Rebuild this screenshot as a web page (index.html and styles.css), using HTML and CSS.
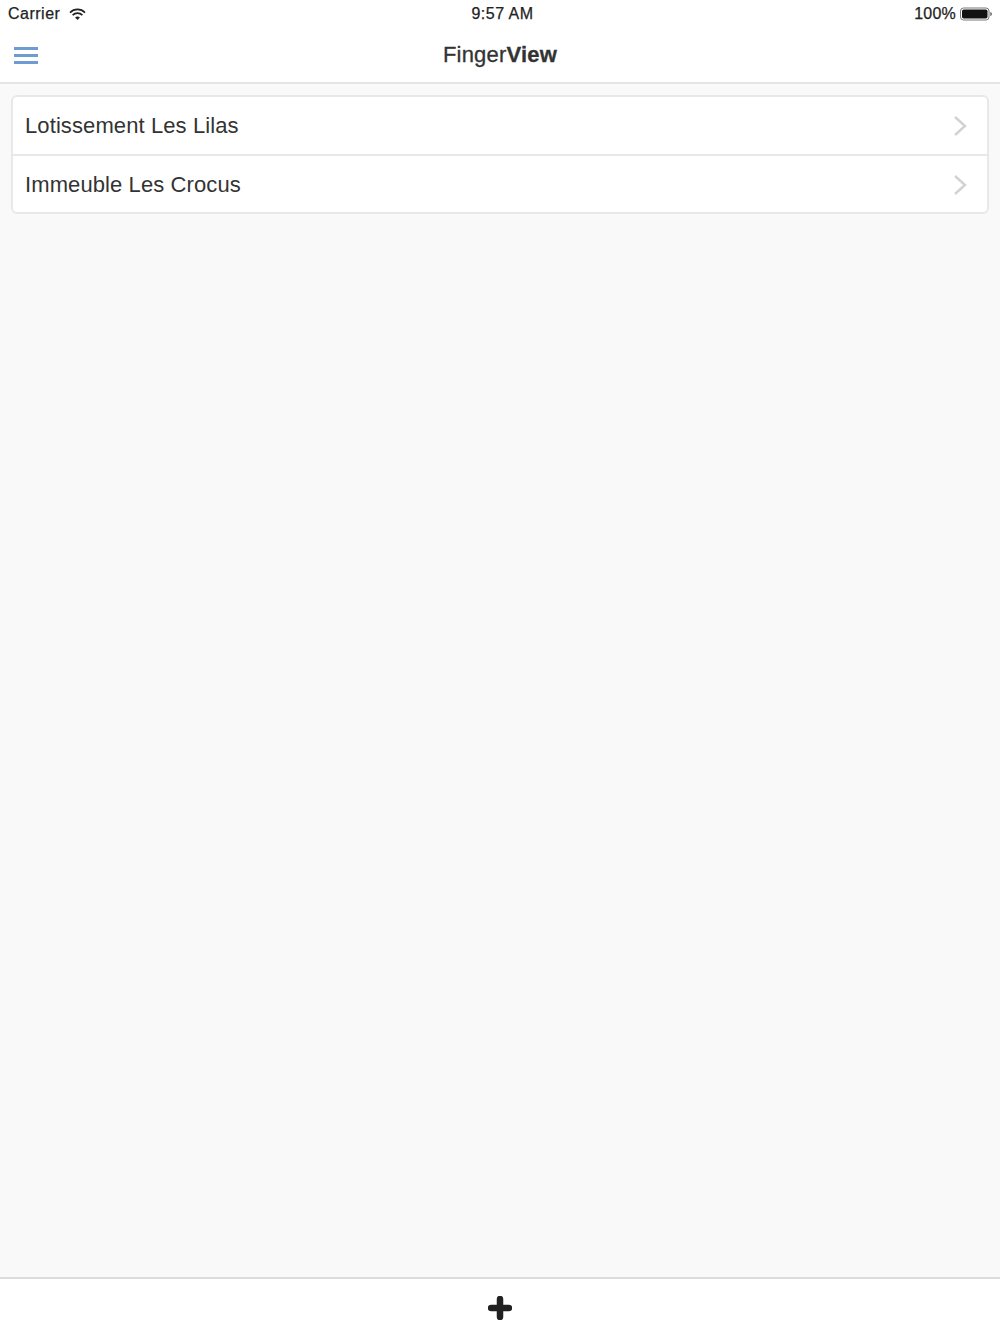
FILE: index.html
```html
<!DOCTYPE html>
<html lang="en">
<head>
    <meta charset="UTF-8">
    <meta name="viewport" content="width=device-width, initial-scale=1.0">
    <title>FingerView</title>
    <link rel="stylesheet" href="styles.css">
</head>
<body>
    <div class="app">
        <header class="top">
            <div class="status-bar">
                <div class="status-left">
                    <span>Carrier</span>
                    <svg class="wifi" width="17" height="13" viewBox="0 0 17 13">
                        <path d="M1 4.6 A10.5 10.5 0 0 1 16 4.6" fill="none" stroke="#222" stroke-width="1.7"/>
                        <path d="M3.6 7.2 A7 7 0 0 1 13.4 7.2" fill="none" stroke="#222" stroke-width="1.7"/>
                        <path d="M6.1 9.6 A3.4 3.4 0 0 1 10.9 9.6 L8.5 12 Z" fill="#222"/>
                    </svg>
                </div>
                <div class="status-time">9:57 AM</div>
                <div class="status-right">
                    <span class="status-pct">100%</span>
                    <svg class="battery" width="33" height="14" viewBox="0 0 33 14">
                        <rect x="0.5" y="1" width="28.5" height="12" rx="3" fill="none" stroke="#777" stroke-width="1"/>
                        <rect x="2" y="2.5" width="25.5" height="9" rx="1.8" fill="#111"/>
                        <path d="M30.2 5 C31.5 5.2 32 6 32 7 C32 8 31.5 8.8 30.2 9 Z" fill="#777"/>
                    </svg>
                </div>
            </div>
            <nav class="nav-bar">
                <a class="menu-btn" href="#" aria-label="Menu">
                    <span></span>
                    <span></span>
                    <span></span>
                </a>
                <h1 class="title">Finger<b>View</b></h1>
            </nav>
        </header>

        <main class="content">
            <ul class="list">
                <li class="list-item">
                    <span>Lotissement Les Lilas</span>
                    <svg class="chevron" width="14" height="22" viewBox="0 0 14 22">
                        <path d="M2 2 L12 11 L2 20" fill="none" stroke="#d2d2d2" stroke-width="2.4"/>
                    </svg>
                </li>
                <li class="list-item">
                    <span>Immeuble Les Crocus</span>
                    <svg class="chevron" width="14" height="22" viewBox="0 0 14 22">
                        <path d="M2 2 L12 11 L2 20" fill="none" stroke="#d2d2d2" stroke-width="2.4"/>
                    </svg>
                </li>
            </ul>
        </main>

        <footer class="bottom-bar">
            <svg class="plus" width="24" height="24" viewBox="0 0 24 24">
                <path d="M12 3 V21 M3 12 H21" fill="none" stroke="#222" stroke-width="6.5" stroke-linecap="round"/>
            </svg>
        </footer>
    </div>
</body>
</html>
```

FILE: styles.css
```css
* {
    margin: 0;
    padding: 0;
    box-sizing: border-box;
}

body {
    background-color: #f9f9f9;
    color: #333;
    font-family: "Liberation Sans", Arial, sans-serif;
}

.app {
    display: flex;
    flex-direction: column;
    height: 1334px;
    overflow: hidden;
}

.top {
    background: #fff;
    border-bottom: 2px solid #e4e4e4;
    height: 84px;
}

.status-bar {
    display: grid;
    grid-template-columns: 1fr auto 1fr;
    align-items: center;
    height: 28px;
    padding: 0 7px 0 8px;
    font-size: 16px;
    letter-spacing: 0.5px;
    color: #222;
    -webkit-text-stroke: 0.25px #222;
}

.status-left {
    display: flex;
    align-items: center;
    gap: 9px;
}

.status-time {
    padding-left: 4px;
}

.status-right {
    display: flex;
    justify-content: flex-end;
    align-items: center;
    gap: 4px;
}

.status-pct {
    letter-spacing: 0.2px;
}

.nav-bar {
    display: flex;
    align-items: center;
    justify-content: center;
    position: relative;
    height: 54px;
}

.menu-btn {
    position: absolute;
    left: 14px;
    top: 19px;
    display: flex;
    flex-direction: column;
    gap: 4px;
    width: 24px;
}

.menu-btn span {
    display: block;
    height: 3px;
    background: #6e9bd3;
}

.title {
    font-size: 22px;
    font-weight: normal;
    letter-spacing: 0.2px;
    color: #333;
    -webkit-text-stroke: 0.3px #333;
}

.title b {
    font-weight: bold;
}

.content {
    flex: 1;
    padding: 11px 11px 0;
}

.list {
    list-style: none;
    background: #fff;
    border: 2px solid #e8e8e8;
    border-radius: 6px;
}

.list-item {
    display: flex;
    justify-content: space-between;
    align-items: center;
    height: 57px;
    padding: 0 20px 0 12px;
    font-size: 22px;
    letter-spacing: 0.1px;
    color: #333;
}

.list-item + .list-item {
    border-top: 2px solid #e8e8e8;
    height: 58px;
    padding-top: 1px;
}

.bottom-bar {
    display: flex;
    justify-content: center;
    align-items: center;
    height: 57px;
    padding-top: 3px;
    background: #fff;
    border-top: 2px solid #dcdcdc;
}
```
